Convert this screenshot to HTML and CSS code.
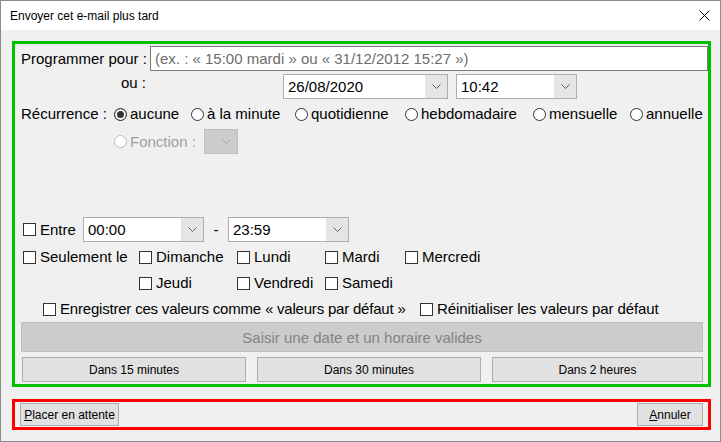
FILE: index.html
```html
<!DOCTYPE html>
<html lang="fr">

<head>
    <meta charset="UTF-8">
    <meta name="viewport" content="width=device-width, initial-scale=1.0">
    <title>Envoyer cet e-mail plus tard</title>
    <link rel="stylesheet" href="styles.css">
</head>

<body>
    <div class="window">
        <div class="titlebar">
            <span class="title">Envoyer cet e-mail plus tard</span>
            <svg class="close" width="11" height="11" viewBox="0 0 11 11">
                <path d="M0.5 0.5L10.5 10.5M10.5 0.5L0.5 10.5" stroke="#000" stroke-width="1" fill="none"/>
            </svg>
        </div>

        <div class="schedule">
            <div class="row row-input">
                <span class="label">Programmer pour :</span>
                <div class="textbox">(ex. : « 15:00 mardi » ou « 31/12/2012 15:27 »)</div>
            </div>

            <div class="row row-date">
                <span class="ou">ou :</span>
                <div class="combo date">
                    <span class="value">26/08/2020</span>
                    <span class="arrow"><svg width="9" height="5" viewBox="0 0 9 5"><path d="M0.5 0.5L4.5 4.5L8.5 0.5" fill="none" stroke="#606060"/></svg></span>
                </div>
                <div class="combo time">
                    <span class="value">10:42</span>
                    <span class="arrow"><svg width="9" height="5" viewBox="0 0 9 5"><path d="M0.5 0.5L4.5 4.5L8.5 0.5" fill="none" stroke="#606060"/></svg></span>
                </div>
            </div>

            <div class="recurrence">
                <span>Récurrence :</span>
                <label class="opt"><span class="radio checked"></span>aucune</label>
                <label class="opt"><span class="radio"></span>à la minute</label>
                <label class="opt"><span class="radio"></span>quotidienne</label>
                <label class="opt"><span class="radio"></span>hebdomadaire</label>
                <label class="opt"><span class="radio"></span>mensuelle</label>
                <label class="opt"><span class="radio"></span>annuelle</label>
            </div>

            <div class="row row-fonction">
                <label class="opt disabled"><span class="radio off"></span>Fonction :</label>
                <div class="combo mini">
                    <span class="arrow"><svg width="9" height="5" viewBox="0 0 9 5"><path d="M0.5 0.5L4.5 4.5L8.5 0.5" fill="none" stroke="#a8a8a8"/></svg></span>
                </div>
            </div>

            <div class="row row-between">
                <label class="opt entre"><span class="chk"></span>Entre</label>
                <div class="combo from">
                    <span class="value">00:00</span>
                    <span class="arrow"><svg width="9" height="5" viewBox="0 0 9 5"><path d="M0.5 0.5L4.5 4.5L8.5 0.5" fill="none" stroke="#606060"/></svg></span>
                </div>
                <span class="dash">-</span>
                <div class="combo to">
                    <span class="value">23:59</span>
                    <span class="arrow"><svg width="9" height="5" viewBox="0 0 9 5"><path d="M0.5 0.5L4.5 4.5L8.5 0.5" fill="none" stroke="#606060"/></svg></span>
                </div>
            </div>

            <div class="days">
                <label class="opt"><span class="chk"></span>Seulement le</label>
                <label class="opt"><span class="chk"></span>Dimanche</label>
                <label class="opt"><span class="chk"></span>Lundi</label>
                <label class="opt"><span class="chk"></span>Mardi</label>
                <label class="opt"><span class="chk"></span>Mercredi</label>
                <label class="opt skip"><span class="chk"></span>Jeudi</label>
                <label class="opt"><span class="chk"></span>Vendredi</label>
                <label class="opt"><span class="chk"></span>Samedi</label>
            </div>

            <div class="defaults">
                <label class="opt save"><span class="chk"></span>Enregistrer ces valeurs comme « valeurs par défaut »</label>
                <label class="opt reset"><span class="chk"></span>Réinitialiser les valeurs par défaut</label>
            </div>

            <div class="btn-big">Saisir une date et un horaire valides</div>

            <div class="quick">
                <button class="btn">Dans 15 minutes</button>
                <button class="btn">Dans 30 minutes</button>
                <button class="btn last">Dans 2 heures</button>
            </div>
        </div>

        <div class="actions">
            <button class="btn hold"><u>P</u>lacer en attente</button>
            <button class="btn cancel"><u>A</u>nnuler</button>
        </div>
    </div>
</body>

</html>
```

FILE: styles.css
```css
* {
    box-sizing: border-box;
}

body {
    margin: 0;
    font-family: "Liberation Sans", Arial, sans-serif;
    font-size: 15px;
    color: #000;
}

.window {
    width: 721px;
    height: 442px;
    border: 1px solid #8c8c8c;
    background: #f0f0f0;
    display: flex;
    flex-direction: column;
}

.titlebar {
    height: 29px;
    flex: none;
    background: #fff;
    display: flex;
    align-items: center;
    justify-content: space-between;
    padding: 0 10px 0 9px;
    font-size: 12px;
}

/* green frame */
.schedule {
    margin: 11px 9px 0 11px;
    height: 346px;
    flex: none;
    border: 3px solid #00c000;
    padding: 2px 0 0 6px;
}

.row {
    display: flex;
    align-items: center;
}

.row-input {
    height: 25px;
}

.label {
    width: 129px;
    flex: none;
}

.textbox {
    flex: 1;
    height: 25px;
    background: #fff;
    border: 1px solid #7a7a7a;
    padding: 0 4px;
    display: flex;
    align-items: center;
    color: #6d6d6d;
}

.row-date {
    margin-top: 3px;
    align-items: flex-start;
}

.ou {
    width: 125px;
    margin-right: 137px;
    text-align: right;
    line-height: 18px;
}

.combo {
    display: flex;
    height: 25px;
    background: #fff;
    border: 1px solid #adadad;
    flex: none;
}

.combo .value {
    flex: 1;
    padding-left: 4px;
    line-height: 23px;
}

.combo .arrow {
    width: 22px;
    background: #e5e5e5;
    display: flex;
    align-items: center;
    justify-content: center;
}

.date {
    width: 165px;
}

.time {
    width: 121px;
    margin-left: 8px;
}

.recurrence {
    display: grid;
    grid-template-columns: 93px 77px 104px 110px 128px 97px auto;
    align-items: center;
    height: 18px;
    line-height: 18px;
    margin-top: 6px;
}

.opt {
    display: flex;
    align-items: center;
    line-height: 18px;
    white-space: nowrap;
}

.radio {
    width: 13px;
    height: 13px;
    flex: none;
    border: 1px solid #333;
    border-radius: 50%;
    background: #fff;
    margin-right: 3px;
}

.radio.checked {
    background: #333;
    box-shadow: inset 0 0 0 2px #fff;
}

.radio.off {
    border-color: #bcbcbc;
}

.chk {
    width: 13px;
    height: 13px;
    flex: none;
    border: 1px solid #333;
    background: #fff;
    margin-right: 4px;
}

.row-fonction {
    margin-top: 6px;
    height: 25px;
    padding-left: 93px;
}

.opt.disabled {
    width: 90px;
    color: #a0a0a0;
}

.combo.mini {
    width: 34px;
    background: #ccc;
    border-color: #bfbfbf;
    justify-content: flex-end;
}

.combo.mini .arrow {
    background: transparent;
}

.row-between {
    margin-top: 63px;
    height: 25px;
    padding-left: 2px;
}

.entre {
    width: 60px;
}

.from,
.to {
    width: 121px;
}

.dash {
    width: 24px;
    text-align: center;
}

.days {
    display: grid;
    grid-template-columns: 116px 98px 88px 80px auto;
    grid-auto-rows: 18px;
    row-gap: 8px;
    margin-top: 6px;
    padding-left: 2px;
}

.days .skip {
    grid-column: 2;
}

.defaults {
    display: flex;
    height: 18px;
    margin-top: 8px;
    padding-left: 22px;
}

.save {
    width: 377px;
    letter-spacing: -0.2px;
}

.reset {
    letter-spacing: -0.1px;
}

.btn-big {
    margin-top: 4px;
    width: 682px;
    height: 30px;
    background: #ccc;
    border: 1px solid #bfbfbf;
    color: #838383;
    display: flex;
    align-items: center;
    justify-content: center;
}

.btn {
    font-family: inherit;
    font-size: 12px;
    color: #000;
    background: #e1e1e1;
    border: 1px solid #adadad;
    padding: 0;
    display: flex;
    align-items: center;
    justify-content: center;
}

.quick {
    display: flex;
    gap: 11px;
    margin-top: 5px;
    padding-left: 1px;
}

.quick .btn {
    width: 224px;
    height: 25px;
}

.quick .btn.last {
    width: 211px;
}

/* red frame */
.actions {
    margin: 12px 9px 0 11px;
    height: 31px;
    flex: none;
    border: 3px solid #f00;
    padding: 0 5px;
    display: flex;
    align-items: center;
    justify-content: space-between;
}

.actions .btn {
    height: 23px;
}

.hold {
    width: 99px;
}

.cancel {
    width: 66px;
}
```
